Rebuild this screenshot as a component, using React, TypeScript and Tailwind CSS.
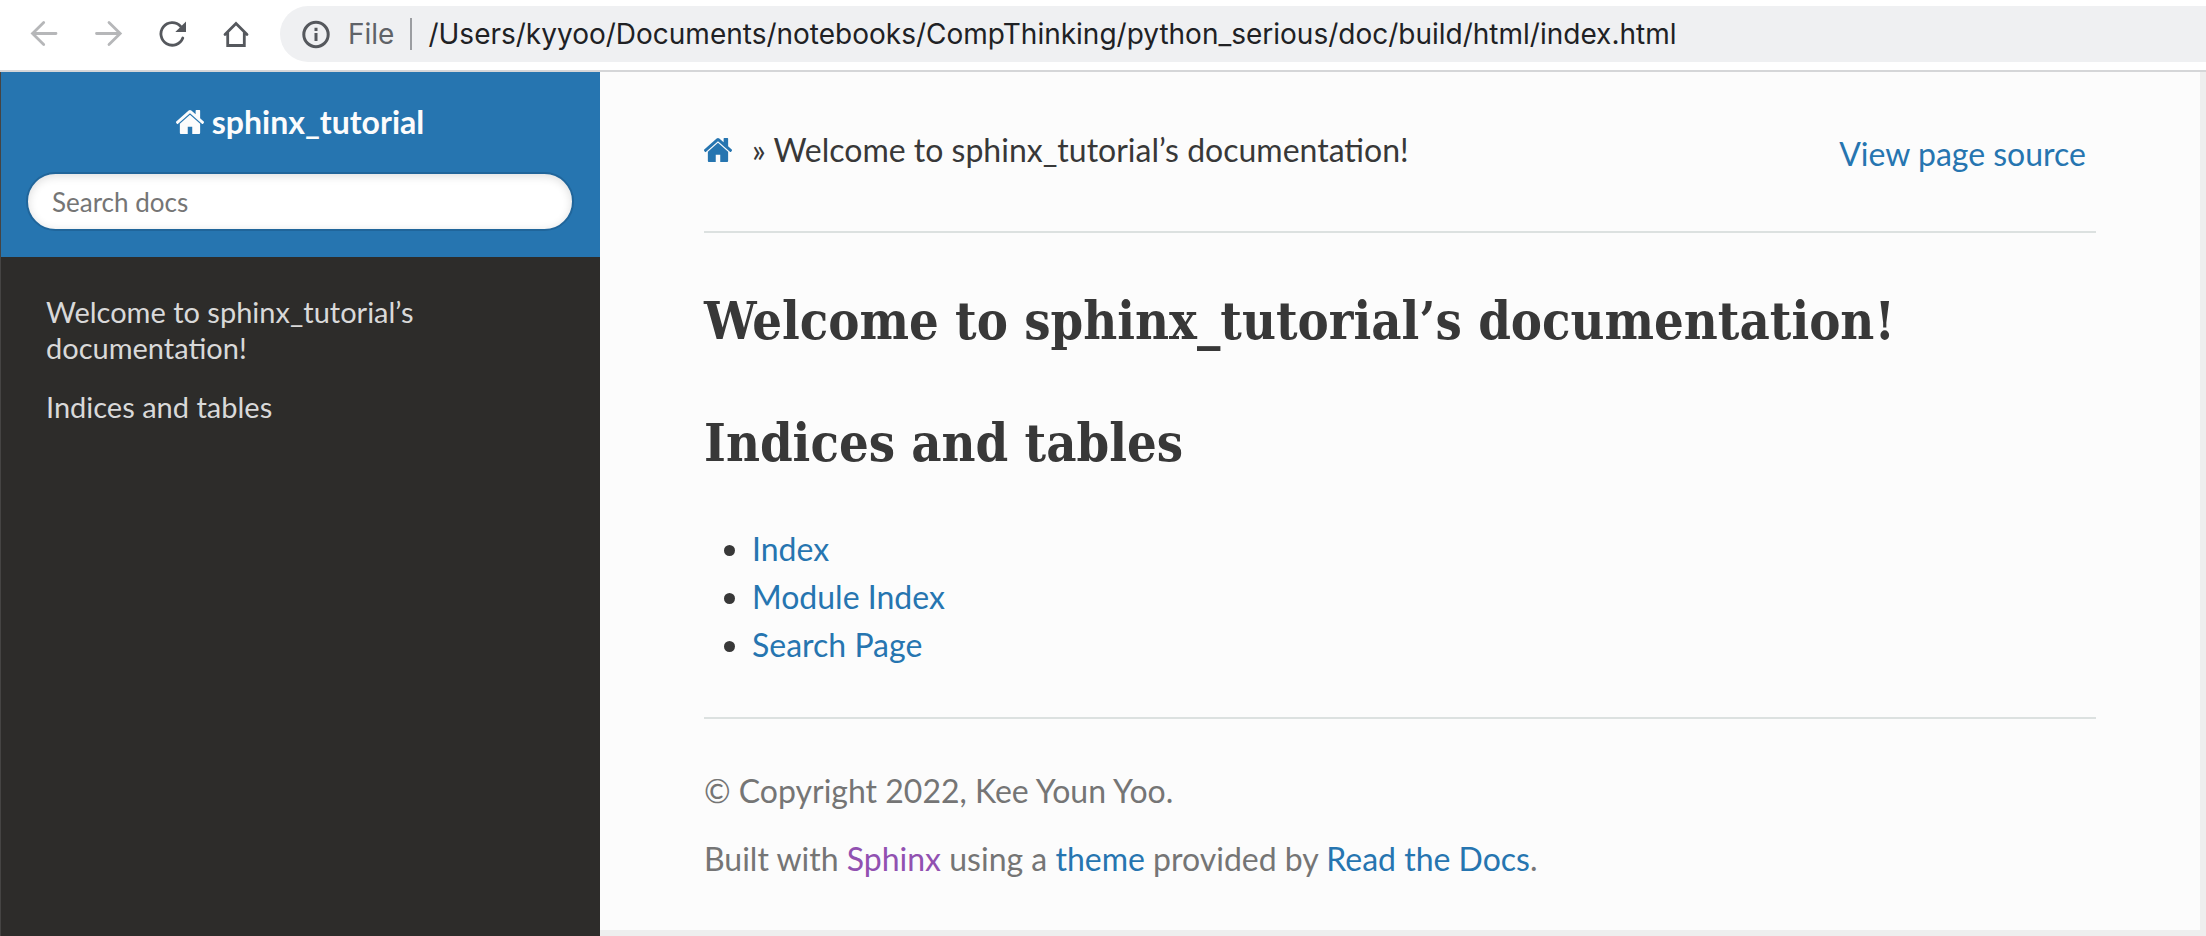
import type { ReactNode } from "react";

const indexLinks = ["Index", "Module Index", "Search Page"];
const sections = ["Welcome to sphinx_tutorial’s documentation!", "Indices and tables"];

function HouseIcon({ className }: { className: string }) {
  return (
    <svg viewBox="37 253 1591 1283" preserveAspectRatio="none" fill="currentColor" aria-hidden="true" className={className}>
      <path d="M1408 992v480q0 26-19 45t-45 19H960v-384H704v384H320q-26 0-45-19t-19-45V992q0-1 .5-3t.5-3l575-474 575 474q1 2 1 6zm223-69l-62 74q-8 9-21 11h-3q-13 0-21-7L832 424 140 1001q-12 8-24 7-13-2-21-11l-62-74q-8-10-7-23.500t11-21.500l719-599q32-26 76-26t76 26l244 204V288q0-14 9-23t23-9h192q14 0 23 9t9 23v408l219 182q10 8 11 21.500t-7 23.500z" />
    </svg>
  );
}

function ToolbarButton({ label, muted, children }: { label: string; muted?: boolean; children: ReactNode }) {
  return (
    <button type="button" aria-label={label} className={muted ? "text-[#b6b7b9]" : "text-[#55585d]"}>
      <svg
        viewBox="0 0 32 32"
        fill="none"
        stroke="currentColor"
        strokeWidth="2.8"
        strokeLinecap="round"
        className="size-8"
      >
        {children}
      </svg>
    </button>
  );
}

function BrowserBar() {
  return (
    <div className="flex h-[72px] items-center border-b-2 border-[#d5d6d8] bg-white pb-0.5 pl-7 font-[Inter,sans-serif] text-[28px]">
      <div className="flex gap-8 pr-7">
        <ToolbarButton label="Back" muted>
          <path d="M28 15.500H4.500M15.700 4.500 4.500 15.500 15.700 26.500" />
        </ToolbarButton>
        <ToolbarButton label="Forward" muted>
          <path d="M4.500 15.500H28M17 4.500 28.200 15.500 17 26.500" />
        </ToolbarButton>
        <ToolbarButton label="Reload">
          <path d="M26.800 20A11.300 11.300 0 1 1 24.500 8.200" />
          <path d="M30 3.500V14H19.300z" fill="currentColor" stroke="none" />
        </ToolbarButton>
        <ToolbarButton label="Home">
          <path d="M5 16.500 16 5.500 27 16.500M7.700 14.500v13h16.600v-13" />
        </ToolbarButton>
      </div>
      <div className="flex h-14 grow items-center rounded-l-full bg-[#eff0f2] pl-5">
        <svg viewBox="0 0 32 32" fill="none" stroke="#55585d" strokeWidth="3" aria-hidden="true" className="size-8">
          <circle cx="16" cy="16.500" r="12.200" />
          <path d="M16 15v8M16 9.800v3.200" />
        </svg>
        <span className="pl-4 text-[#5f6368]">File</span>
        <span className="mx-4 h-8 w-0.5 bg-[#9b9da1]" />
        <span className="whitespace-nowrap text-[#202124]">
          /Users/kyyoo/Documents/notebooks/CompThinking/python_serious/doc/build/html/index.html
        </span>
      </div>
    </div>
  );
}

function Sidebar() {
  return (
    <aside className="w-[600px] shrink-0 border-l border-[#454443] bg-[#2d2c2a]">
      <div className="bg-[#2675b0] py-[26px] pr-[26px] pl-[25px]">
        <a href="#" className="flex items-center justify-center gap-2 text-[32px] leading-[48px] font-bold text-[#fcfcfc]">
          <HouseIcon className="h-6 w-7" />
          sphinx_tutorial
        </a>
        <input
          type="search"
          aria-label="Search docs"
          placeholder="Search docs"
          className="mt-[26px] block h-[59px] w-full rounded-full border-2 border-[#20659a] bg-white px-6 text-[26px] shadow-[inset_0_2px_10px_#dddddd] placeholder:text-[#757575]"
        />
      </div>
      <nav className="flex flex-col gap-[23px] px-[45px] pt-[37px] text-[29px] leading-9 text-[#d9d9d9]">
        {sections.map((name) => (
          <a key={name} href="#">
            {name}
          </a>
        ))}
      </nav>
    </aside>
  );
}

export default function App() {
  return (
    <div className="flex min-h-screen flex-col font-[Lato,sans-serif]">
      <BrowserBar />
      <div className="flex grow bg-[#eeeeee]">
        <Sidebar />
        <main className="mb-1.5 max-w-[1600px] grow bg-[#fcfcfc] px-[104px] pt-[54px] text-[32px] leading-[48px] text-[#383838]">
          <div className="flex items-start justify-between">
            <div className="flex items-center">
              <a href="#" aria-label="Home" className="text-[#2675b0]">
                <HouseIcon className="h-6 w-7" />
              </a>
              <span className="pl-5">» {sections[0]}</span>
            </div>
            <a href="#" className="pt-1 pr-2.5 text-[#2675b0]">
              View page source
            </a>
          </div>
          <hr className="mt-[53px] border-t-2 border-[#dce1e0]" />
          <h1 className="mt-[60px] font-['Roboto_Slab','DejaVu_Serif_Condensed','DejaVu_Serif',serif] text-[52px] leading-[56px] font-bold">{sections[0]}</h1>
          <h1 className="mt-[66px] font-['Roboto_Slab','DejaVu_Serif_Condensed','DejaVu_Serif',serif] text-[52px] leading-[56px] font-bold">{sections[1]}</h1>
          <ul className="mt-[54px] list-disc pl-12">
            {indexLinks.map((name) => (
              <li key={name}>
                <a href="#" className="text-[#2675b0]">
                  {name}
                </a>
              </li>
            ))}
          </ul>
          <hr className="mt-12 border-t-2 border-[#dce1e0]" />
          <footer className="flex flex-col gap-5 pt-12 text-[#757575]">
            <p>© Copyright 2022, Kee Youn Yoo.</p>
            <p>
              Built with <a href="#" className="text-[#9151b1]">Sphinx</a> using a{" "}
              <a href="#" className="text-[#2675b0]">theme</a> provided by{" "}
              <a href="#" className="text-[#2675b0]">Read the Docs</a>.
            </p>
          </footer>
        </main>
      </div>
    </div>
  );
}
